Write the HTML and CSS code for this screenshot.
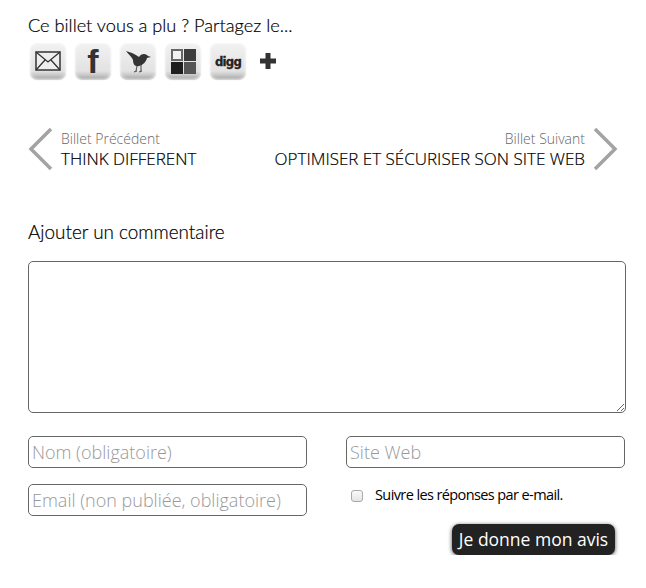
FILE: index.html
```html
<!DOCTYPE html>
<html lang="fr">
<head>
  <meta charset="UTF-8">
  <meta name="viewport" content="width=device-width, initial-scale=1.0">
  <title>Ajouter un commentaire</title>
  <link rel="stylesheet" href="styles.css">
</head>
<body>

<div class="container">
  <!-- Partage -->
  <h3 class="share-title">Ce billet vous a plu ? Partagez le...</h3>
  <div class="share-icons">
    <a class="share-btn" href="#">
      <svg width="26" height="20" viewBox="0 0 26 20"><rect x="1" y="1" width="24" height="18" fill="#eee" stroke="#333" stroke-width="1.500"/><path d="M1 1l12 10L25 1M1 19l9-10M25 19l-9-10" fill="none" stroke="#333" stroke-width="1.300"/></svg>
    </a>
    <a class="share-btn share-f" href="#">f</a>
    <a class="share-btn" href="#">
      <svg width="26" height="26" viewBox="0 0 26 26"><path d="M1 3l6 2c3 1 5 3 7 4 1-2 3-3 5-3s3 1 4 2l3 1-4 1c-1 4-4 7-8 8-4 1-6-2-6-6C7 9 3 6 1 3z" fill="#333"/><path d="M12 18l-1 5M16 17v6M9 24l3-1M14 24l3-1" fill="none" stroke="#555" stroke-width="1.100"/></svg>
    </a>
    <a class="share-btn" href="#">
      <span class="delicious">
        <span class="dl-light"></span><span class="dl-mid"></span>
        <span class="dl-dark"></span><span class="dl-mid2"></span>
      </span>
    </a>
    <a class="share-btn share-digg" href="#">digg</a>
    <a class="share-more" href="#">
      <svg width="16" height="16" viewBox="0 0 16 16"><path d="M5.500 0h5v5.500H16v5h-5.500V16h-5v-5.500H0v-5h5.500z" fill="#333"/></svg>
    </a>
  </div>

  <!-- Billets -->
  <div class="post-nav">
    <a class="post-link" href="#">
      <svg class="chevron" width="25" height="44" viewBox="0 0 25 44"><path d="M23 2L3 22l20 20" fill="none" stroke="#a3a3a3" stroke-width="3.500"/></svg>
      <span class="post-text">
        <span class="post-label">Billet Précédent</span>
        <span class="post-name">THINK DIFFERENT</span>
      </span>
    </a>
    <a class="post-link post-next" href="#">
      <span class="post-text">
        <span class="post-label">Billet Suivant</span>
        <span class="post-name">OPTIMISER ET SÉCURISER SON SITE WEB</span>
      </span>
      <svg class="chevron" width="25" height="44" viewBox="0 0 25 44"><path d="M2 2l20 20L2 42" fill="none" stroke="#a3a3a3" stroke-width="3.500"/></svg>
    </a>
  </div>

  <!-- Formulaire -->
  <form class="comment-form">
    <h3 class="form-title">Ajouter un commentaire</h3>
    <textarea class="comment-box"></textarea>
    <div class="fields">
      <input type="text" placeholder="Nom (obligatoire)">
      <input type="text" placeholder="Site Web">
      <input type="text" placeholder="Email (non publiée, obligatoire)">
      <label class="follow"><input type="checkbox"><span>Suivre les réponses par e-mail.</span></label>
    </div>
    <div class="form-actions">
      <button type="button" class="submit-btn">Je donne mon avis</button>
    </div>
  </form>
</div>

</body>
</html>
```

FILE: styles.css
```css
/* Estilos generales */
body {
  font-family: "Open Sans", sans-serif;
  background: #fff;
  margin: 0;
  padding: 0;
  color: #000;
}
.container {
  padding: 14px 20px 0 28px;
}
h3 {
  font-family: Lato, sans-serif;
  font-size: 18.200px;
  font-weight: 300;
  line-height: 22px;
  margin: 0;
  color: #000;
  -webkit-text-stroke: 0.2px #000;
}
a {
  text-decoration: none;
  color: inherit;
}

/* Partage */
.share-icons {
  display: flex;
  align-items: center;
  gap: 9px;
  margin: 7px 0 0 2px;
}
.share-btn {
  width: 36px;
  height: 36px;
  box-sizing: border-box;
  border-radius: 7px;
  display: flex;
  align-items: center;
  justify-content: center;
  background: linear-gradient(#f2f2f2, #e2e2e2 78%, #c6c6c6 90%, #9a9a9a);
  box-shadow: inset 0 0 3px #fff, 0 1px 1px rgba(0,0,0,0.2);
  overflow: hidden;
}
.share-f {
  font-family: "Liberation Sans", sans-serif;
  font-size: 34px;
  font-weight: bold;
  color: #333;
}
.share-digg {
  font-family: "DejaVu Sans Condensed", "DejaVu Sans", sans-serif;
  font-size: 13px;
  font-weight: bold;
  letter-spacing: -0.8px;
  color: #222;
  -webkit-text-stroke: 0.3px #222;
}
.delicious {
  display: grid;
  grid-template-columns: 12px 12px;
  grid-template-rows: 12px 12px;
  gap: 1px;
}
.dl-light { background: #f2f2f2; border: 2px solid #666; box-sizing: border-box; }
.dl-mid { background: #3e3e3e; }
.dl-dark { background: #1e1e1e; }
.dl-mid2 { background: #555; }
.share-more {
  display: flex;
  margin-left: 5px;
}

/* Billets */
.post-nav {
  display: flex;
  justify-content: space-between;
  margin: 48px 8px 0 0;
}
.post-link {
  display: flex;
  align-items: center;
  gap: 8px;
}
.post-text {
  display: flex;
  flex-direction: column;
}
.post-next .post-text {
  text-align: right;
}
.post-label {
  font-size: 14px;
  line-height: 19px;
  font-weight: 300;
  color: #666;
}
.post-name {
  font-size: 17px;
  line-height: 22px;
  font-weight: 300;
  color: #000;
  -webkit-text-stroke: 0.2px #000;
}

/* Formulario */
.comment-form {
  margin-top: 50px;
}
.form-title {
  font-size: 18.900px;
}
.comment-box {
  display: block;
  width: 598px;
  height: 152px;
  box-sizing: border-box;
  margin-top: 18px;
  border: 1px solid #666;
  border-radius: 5px;
  background: #fff;
}
.fields {
  display: grid;
  grid-template-columns: 279px 279px;
  column-gap: 39px;
  row-gap: 16px;
  margin-top: 23px;
}
.fields input[type="text"] {
  height: 32px;
  box-sizing: border-box;
  padding: 0 3px;
  border: 1px solid #666;
  border-radius: 5px;
  font-family: "Open Sans", sans-serif;
  font-size: 18px;
  font-weight: 300;
}
.fields input[type="text"]::placeholder {
  color: #999;
  opacity: 1;
}
.follow {
  display: flex;
  align-items: center;
  gap: 12px;
  padding-left: 5px;
  font-size: 14.500px;
  letter-spacing: -0.6px;
  color: #000;
  height: 24px;
}
.follow span {
  margin-top: -4px;
}
.follow input {
  appearance: none;
  width: 12px;
  height: 12px;
  margin: 0;
  border: 1px solid #aaa;
  border-radius: 3px;
  background: linear-gradient(#fafafa, #e4e4e4);
}
.form-actions {
  display: flex;
  justify-content: flex-end;
  width: 587px;
  margin-top: 8px;
}
.submit-btn {
  width: 163px;
  height: 31px;
  padding: 0 0 2px;
  border: none;
  border-radius: 7px;
  background: #222;
  color: #fff;
  font-family: "Open Sans", sans-serif;
  font-size: 17.500px;
  white-space: nowrap;
  box-shadow: 0 1px 4px rgba(0,0,0,0.7);
  cursor: pointer;
}
```
